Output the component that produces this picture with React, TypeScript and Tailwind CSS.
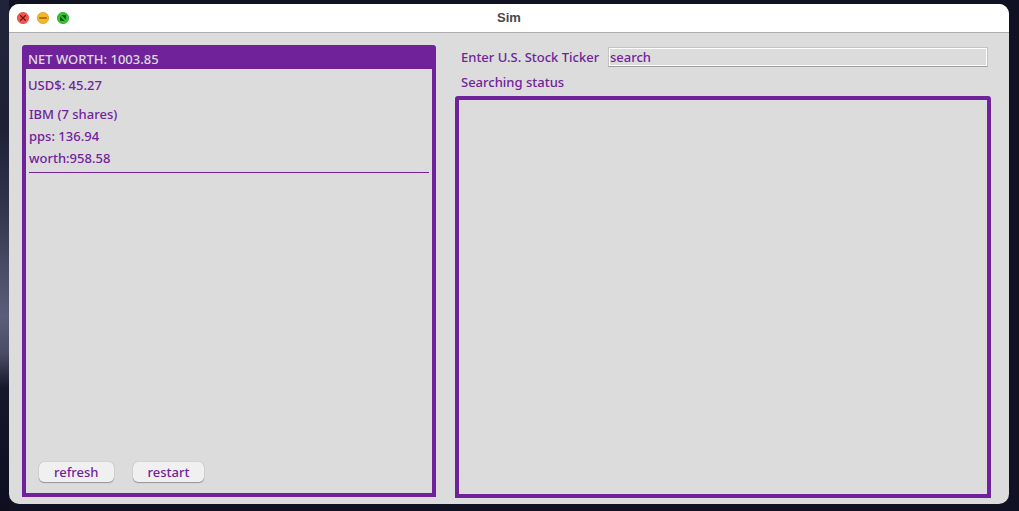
import React, { useState } from "react";

const holdings = [{ ticker: "IBM", shares: 7, pps: "136.94", worth: "958.58" }];

function WindowControls() {
  return (
    <div className="flex gap-2">
      <button type="button" aria-label="Close" className="size-3">
        <svg viewBox="0 0 12 12" className="block size-3">
          <circle cx="6" cy="6" r="5.6" fill="#ee5a50" stroke="#d1473f" strokeWidth="0.8" />
          <path d="M3.2 3.2l5.6 5.6M8.8 3.2L3.2 8.8" stroke="#7d120c" strokeWidth="1.3" />
        </svg>
      </button>
      <button type="button" aria-label="Minimize" className="size-3">
        <svg viewBox="0 0 12 12" className="block size-3">
          <circle cx="6" cy="6" r="5.6" fill="#f3b727" stroke="#d69d1c" strokeWidth="0.8" />
          <path d="M2.2 6h7.6" stroke="#97600b" strokeWidth="1.7" />
        </svg>
      </button>
      <button type="button" aria-label="Zoom" className="size-3">
        <svg viewBox="0 0 12 12" className="block size-3">
          <circle cx="6" cy="6" r="5.6" fill="#35c32f" stroke="#27a522" strokeWidth="0.8" />
          <path d="M4.2 3h3.9a.9.9 0 0 1 .9.9v3.9zM3 4.2v3.9a.9.9 0 0 0 .9.9h3.9z" fill="#0b5a0b" />
        </svg>
      </button>
    </div>
  );
}

function PushButton({ children }: { children: React.ReactNode }) {
  return (
    <button
      type="button"
      className="h-5 rounded-[5px] bg-[#f0f0f0] px-[15px] font-medium leading-5 shadow-[0_0_1px_rgba(0,0,0,0.3),0_1px_1px_rgba(0,0,0,0.3)]"
    >
      {children}
    </button>
  );
}

export default function App() {
  const [query, setQuery] = useState("search");

  return (
    <div className="flex h-screen bg-[linear-gradient(180deg,#20243a_0%,#1e2136_25%,#30344a_40%,#5b5e78_62%,#4a4d65_69%,#15172b_76%,#0d0f20_100%)] bg-[length:9px_100%] bg-no-repeat bg-[#101224] pt-1 pr-[10px] pb-[7px] pl-[9px] font-['Noto_Sans','Open_Sans',sans-serif] text-[13px] font-medium text-[#70229b]">
      <main className="flex grow flex-col overflow-hidden rounded-[10px] bg-[#dcdcdc]">
        <header className="grid h-[29px] shrink-0 grid-cols-[1fr_auto_1fr] items-center border-b border-[#adadad] bg-white px-2">
          <WindowControls />
          <h1 className="font-['Liberation_Sans',sans-serif] text-[13px] font-bold text-[#474747]">Sim</h1>
        </header>

        <div className="flex min-h-0 grow pr-[18px] pl-[13px]">
          <section className="mt-3 mb-[7px] flex w-[414px] shrink-0 flex-col rounded-t-[3px] border-4 border-[#70229b]">
            <h2 className="h-5 shrink-0 bg-[#70229b] px-[2px] leading-5 text-[#dcdcdc]">NET WORTH: 1003.85</h2>
            <p className="mt-[6px] px-[2px] leading-5">USD$: 45.27</p>
            <ul className="mt-2 px-[3px] leading-[22px]">
              {holdings.map((h) => (
                <li key={h.ticker} className="border-b border-[#70229b] pb-[3px]">
                  <p>{`${h.ticker} (${h.shares} shares)`}</p>
                  <p>{`pps: ${h.pps}`}</p>
                  <p>{`worth:${h.worth}`}</p>
                </li>
              ))}
            </ul>
            <div className="mt-auto flex gap-[19px] px-[13px] pb-[11px]">
              <PushButton>refresh</PushButton>
              <PushButton>restart</PushButton>
            </div>
          </section>

          <section className="mt-[14px] mb-[6px] ml-[19px] flex min-w-0 grow flex-col">
            <div className="flex h-5 shrink-0 items-center gap-[5px] pr-[3px] pl-[6px]">
              <label htmlFor="ticker" className="w-[142px] shrink-0 whitespace-nowrap leading-5">
                Enter U.S. Stock Ticker
              </label>
              <input
                id="ticker"
                type="text"
                value={query}
                onChange={(e) => setQuery(e.target.value)}
                className="h-5 min-w-0 grow border border-[#c4c4c4] border-b-[#a0a0a0] bg-[#dcdcdc] px-px font-medium leading-4 shadow-[inset_0_0_0_1px_#fff] outline-none"
              />
            </div>
            <p role="status" className="mt-[5px] mb-1 shrink-0 pl-[6px] leading-5">
              Searching status
            </p>
            <div className="grow rounded-t-[3px] border-4 border-[#70229b]" />
          </section>
        </div>
      </main>
    </div>
  );
}
